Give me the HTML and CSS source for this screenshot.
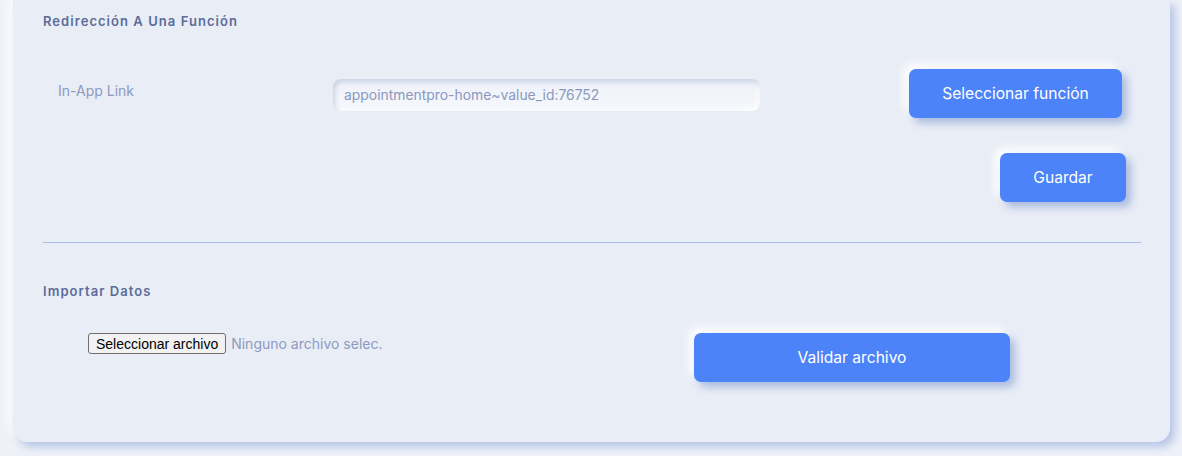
FILE: index.html
```html
<!DOCTYPE html>
<html lang="es">
<head>
    <meta charset="UTF-8">
    <meta name="viewport" content="width=device-width, initial-scale=1.0">
    <title>Configuración</title>
    <link rel="stylesheet" href="styles.css">
</head>
<body>
    <div class="card">
        <h2 class="section-title">Redirección A Una Función</h2>
        <div class="link-row">
            <div class="field-label">In-App Link</div>
            <div class="field-input">appointmentpro-home~value_id:76752</div>
            <button class="btn btn-select">Seleccionar función</button>
        </div>
        <div class="save-row">
            <button class="btn btn-save">Guardar</button>
        </div>

        <hr class="separator">

        <h2 class="section-title section-import">Importar Datos</h2>
        <div class="import-row">
            <div class="file-picker">
                <button class="file-btn">Seleccionar archivo</button>
                <span class="file-name">Ninguno archivo selec.</span>
            </div>
            <button class="btn btn-validate">Validar archivo</button>
        </div>
    </div>
</body>
</html>
```

FILE: styles.css
```css
body {
    margin: 0;
    padding: 0 12px 14px 13px;
    background-color: #eef1f7;
    font-family: Inter, "Noto Sans", sans-serif;
    overflow: hidden;
}

.card {
    background-color: #e9edf6;
    border-radius: 0 0 14px 14px;
    padding: 0 29px 60px 30px;
    box-shadow: 5px 5px 9px #b6c6e6, -5px -5px 10px #fbfcff;
}

.section-title {
    margin: 0;
    padding-top: 13px;
    font-size: 13px;
    line-height: 16px;
    font-weight: 600;
    letter-spacing: 1.05px;
    color: #5b6c9a;
}

.link-row {
    display: flex;
    align-items: center;
    margin-top: 40px;
}

.field-label {
    width: 275px;
    padding-left: 15px;
    margin-top: -6px;
    font-size: 14px;
    color: #8d9abe;
}

.field-input {
    width: 416px;
    height: 32px;
    line-height: 32px;
    padding-left: 11px;
    margin-top: 2px;
    border-radius: 8px;
    font-size: 13.9px;
    color: #8a98c0;
    background: linear-gradient(180deg, #eef1f8, #f6f8fc);
    box-shadow: inset 2px 3px 5px #c9d2e6, inset -2px -2px 4px #ffffff;
}

.btn {
    height: 49px;
    border: none;
    border-radius: 7px;
    background-color: #4c83f9;
    color: #ffffff;
    font-family: Inter, "Noto Sans", sans-serif;
    font-size: 15.6px;
    box-shadow: 5px 5px 8px #a9bade, -5px -5px 10px #ffffff;
}

.btn-select {
    width: 213px;
    margin-left: 149px;
}

.save-row {
    display: flex;
    justify-content: flex-end;
    margin-top: 35px;
    padding-right: 15px;
}

.btn-save {
    width: 126px;
}

.separator {
    margin: 40px 0 0;
    border: none;
    border-top: 1px solid #abbfe9;
}

.section-title.section-import {
    padding-top: 40px;
}

.import-row {
    display: flex;
    align-items: flex-start;
    margin-top: 34px;
}

.file-picker {
    width: 606px;
    padding-left: 45px;
    display: flex;
    align-items: center;
}

.file-btn {
    height: 21px;
    padding: 0 7px;
    border: 1px solid #6f6f6f;
    border-radius: 3px;
    background-color: #f2f2f2;
    color: #000000;
    font-family: "Liberation Sans", Arial, sans-serif;
    font-size: 14px;
}

.file-name {
    margin-left: 5px;
    font-size: 14px;
    color: #8d9abe;
}

.btn-validate {
    width: 316px;
}
```
